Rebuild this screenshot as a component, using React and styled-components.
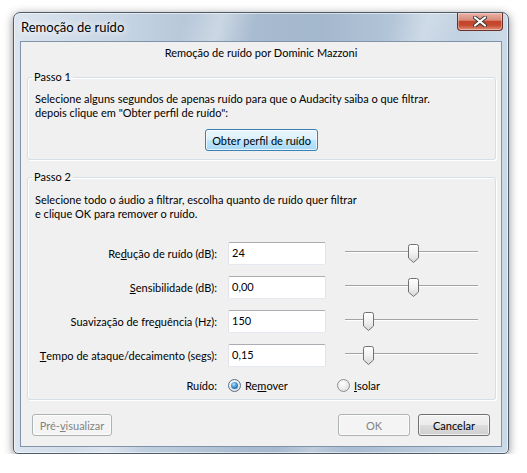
import React from "react";
import styled, { createGlobalStyle } from "styled-components";

const GlobalStyle = createGlobalStyle`
  body {
    margin: 0;
    background: #fff;
    font-family: Lato, "Open Sans", sans-serif;
    font-size: 11px;
    color: #000;
  }
`;

const Page = styled.div`
  padding: 12px 0 0 13px;
`;

const Window = styled.div`
  width: 496px;
  box-sizing: border-box;
  border: 1px solid #4f5b68;
  border-radius: 7px 7px 5px 5px;
  padding: 0 6px 6px 6px;
  display: flex;
  flex-direction: column;
  background:
    linear-gradient(105deg, rgba(255, 255, 255, 0) 28%, rgba(255, 255, 255, 0.35) 34%, rgba(255, 255, 255, 0) 40%,
      rgba(255, 255, 255, 0) 62%, rgba(255, 255, 255, 0.3) 68%, rgba(255, 255, 255, 0) 74%),
    linear-gradient(to right, #dbe5ef 0%, #c6d4e3 22%, #a8bbd0 48%, #a3b7cd 62%, #b9cadc 82%, #ccdae8 100%);
  box-shadow: 0 2px 10px rgba(0, 0, 0, 0.45), inset 0 0 0 1px rgba(255, 255, 255, 0.55);
`;

const TitleBar = styled.div`
  height: 28px;
  display: flex;
  align-items: center;
  padding-left: 1px;
`;

const Title = styled.span`
  font-size: 13px;
  text-shadow: 0 0 6px #fff, 0 0 10px rgba(255, 255, 255, 0.9);
`;

const CloseButton = styled.div`
  align-self: flex-start;
  margin-left: auto;
  margin-right: -1px;
  width: 46px;
  height: 18px;
  box-sizing: border-box;
  border: 1px solid #6a3126;
  border-top: none;
  border-radius: 0 0 4px 4px;
  display: flex;
  align-items: center;
  justify-content: center;
  background: linear-gradient(#e9b2a6 0%, #d98c7b 42%, #c3452c 50%, #c5492f 72%, #e3927c 100%);
  box-shadow: inset 0 0 0 1px rgba(255, 255, 255, 0.35);
`;

const Client = styled.div`
  background: #f0f0f0;
  border: 1px solid #8093a8;
  display: flex;
  flex-direction: column;
  height: 406px;
  box-sizing: border-box;
`;

const Header = styled.div`
  margin-top: 3px;
  line-height: 15px;
  text-align: center;
`;

const Group = styled.fieldset`
  margin: 10px 5px 0 6px;
  border: 1px solid #d5dfe5;
  border-radius: 3px;
  padding: ${p => p.$pad};
  box-shadow: inset 1px 1px 0 #fff, 1px 1px 0 #fff;
  min-inline-size: 0;
`;

const Legend = styled.legend`
  line-height: 14px;
  padding: 0 2px;
  margin-left: -3px;
`;

const Text = styled.div`
  line-height: 14px;
`;

const Button = styled.button`
  height: 22px;
  width: ${p => p.$w}px;
  box-sizing: border-box;
  padding: 0;
  border-radius: 3px;
  font: inherit;
  color: ${p => (p.disabled ? "#838383" : "#000")};
  border: 1px solid ${p => (p.disabled ? "#adb2b5" : p.$hot ? "#3c7fb1" : "#707070")};
  background: ${p =>
    p.disabled
      ? "#f4f4f4"
      : p.$hot
      ? "linear-gradient(#eaf6fd 0%, #d9f0fc 50%, #bee6fd 50%, #a7d9f5 100%)"
      : "linear-gradient(#f2f2f2 0%, #ebebeb 50%, #dddddd 50%, #cfcfcf 100%)"};
  box-shadow: inset 0 0 0 1px rgba(255, 255, 255, 0.7);
`;

const Center = styled.div`
  display: flex;
  justify-content: center;
  margin-top: 9px;
`;

const Rows = styled.div`
  margin-top: 21px;
  display: grid;
  grid-template-columns: 182px 98px 141px;
  column-gap: 11px;
  row-gap: 11px;
`;

const Label = styled.div`
  display: flex;
  align-items: center;
  justify-content: flex-end;
  height: ${p => p.$h || 23}px;
`;

const Field = styled.input`
  height: 23px;
  width: 98px;
  box-sizing: border-box;
  margin: 0;
  padding: 0 3px 3px;
  font: inherit;
  background: #fff;
  border: 1px solid #e2e3ea;
  border-top-color: #abadb3;
  border-bottom-color: #e3e9ef;
  border-radius: 2px;
  outline: none;
`;

const Slider = styled.div`
  position: relative;
  width: 133px;
  height: 19px;
  margin-left: 8px;
  align-self: center;
`;

const Track = styled.div`
  position: absolute;
  left: 0;
  right: 0;
  top: 7px;
  height: 2px;
  background: linear-gradient(#a3a3a3 50%, #ffffff 50%);
`;

const Thumb = styled.svg`
  position: absolute;
  top: 0;
`;

const RadioRow = styled.div`
  grid-column: 2 / 4;
  display: flex;
  align-items: center;
  height: 14px;
`;

const Option = styled.label`
  display: flex;
  align-items: center;
  gap: 4px;
  width: ${p => p.$w}px;
`;

const Radio = styled.span`
  width: 13px;
  height: 13px;
  box-sizing: border-box;
  border-radius: 50%;
  border: 1px solid ${p => (p.$on ? "#5a6f84" : "#8e8f8f")};
  background: radial-gradient(circle at 40% 35%, #ffffff 0%, #eaeaea 55%, #cfd2d4 100%);
  display: flex;
  align-items: center;
  justify-content: center;
  &::after {
    content: "";
    display: ${p => (p.$on ? "block" : "none")};
    width: 7px;
    height: 7px;
    border-radius: 50%;
    background: radial-gradient(circle at 40% 35%, #b8e6fb 0%, #3d93d1 45%, #0f4f8c 100%);
  }
`;

const Footer = styled.div`
  margin-top: 14px;
  padding: 0 11px;
  display: flex;
  gap: 8px;
  & > :first-child {
    margin-right: auto;
  }
`;

const params = [
  { label: <>Re<u>d</u>ução de ruído (dB):</>, value: "24", pos: 63 },
  { label: <><u>S</u>ensibilidade (dB):</>, value: "0,00", pos: 63 },
  { label: <>Suavização de fre<u>q</u>uência (Hz):</>, value: "150", pos: 18 },
  { label: <><u>T</u>empo de ataque/decaimento (segs):</>, value: "0,15", pos: 18 }
];

const ThumbIcon = ({ left }) => (
  <Thumb width="11" height="19" viewBox="0 0 11 19" style={{ left }}>
    <defs>
      <linearGradient id="tg" x1="0" y1="0" x2="0" y2="1">
        <stop offset="0" stopColor="#ffffff" />
        <stop offset="0.5" stopColor="#f1f1f1" />
        <stop offset="1" stopColor="#d6d6d6" />
      </linearGradient>
    </defs>
    <path
      d="M0.5 2.5 Q0.5 0.5 2.5 0.5 H8.5 Q10.5 0.5 10.5 2.5 V14 L5.5 18.5 L0.5 14 Z"
      fill="url(#tg)"
      stroke="#707070"
    />
  </Thumb>
);

const App = () => (
  <Page>
    <GlobalStyle />
    <Window>
      <TitleBar>
        <Title>Remoção de ruído</Title>
        <CloseButton>
          <svg width="14" height="11" viewBox="0 0 14 11">
            <path d="M2 1.5 L12 9.5 M12 1.5 L2 9.5" stroke="#3a3a3a" strokeWidth="4" strokeLinecap="round" />
            <path d="M2 1.5 L12 9.5 M12 1.5 L2 9.5" stroke="#ffffff" strokeWidth="2.2" strokeLinecap="round" />
          </svg>
        </CloseButton>
      </TitleBar>
      <Client>
        <Header>Remoção de ruído por Dominic Mazzoni</Header>
        <Group $pad="8px 7px 8px 7px">
          <Legend>Passo 1</Legend>
          <Text>Selecione alguns segundos de apenas ruído para que o Audacity saiba o que filtrar.</Text>
          <Text>depois clique em "Obter perfil de ruído":</Text>
          <Center>
            <Button $w={113} $hot>Obter perfil de ruído</Button>
          </Center>
        </Group>
        <Group $pad="9px 7px 7px 7px">
          <Legend>Passo 2</Legend>
          <Text>Selecione todo o áudio a filtrar, escolha quanto de ruído quer filtrar</Text>
          <Text>e clique OK para remover o ruído.</Text>
          <Rows>
            {params.map((p, i) => (
              <React.Fragment key={i}>
                <Label>{p.label}</Label>
                <Field readOnly value={p.value} />
                <Slider>
                  <Track />
                  <ThumbIcon left={p.pos} />
                </Slider>
              </React.Fragment>
            ))}
            <Label $h={14}>Ruído:</Label>
            <RadioRow>
              <Option $w={109}>
                <Radio $on />
                <span>Re<u>m</u>over</span>
              </Option>
              <Option>
                <Radio />
                <span><u>I</u>solar</span>
              </Option>
            </RadioRow>
          </Rows>
        </Group>
        <Footer>
          <Button $w={80} disabled>Pré-<u>v</u>isualizar</Button>
          <Button $w={72} disabled>OK</Button>
          <Button $w={72}>Cancelar</Button>
        </Footer>
      </Client>
    </Window>
  </Page>
);

export default App;
